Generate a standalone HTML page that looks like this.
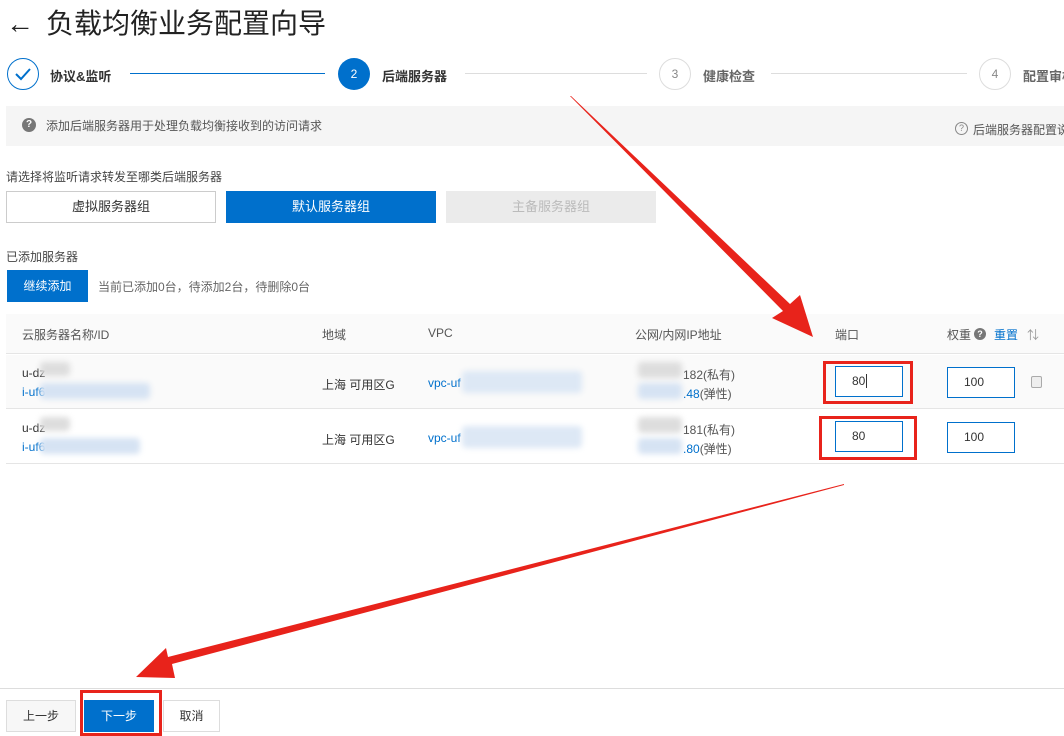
<!DOCTYPE html>
<html><head><meta charset="utf-8"><style>
*{margin:0;padding:0;box-sizing:border-box}
body{width:1064px;height:736px;overflow:hidden;background:#fff;position:relative;font-family:"Liberation Sans","Noto Sans CJK SC",sans-serif;color:#333;font-size:12px}
.a{position:absolute;white-space:nowrap}
.circ{position:absolute;width:32px;height:32px;border-radius:50%;text-align:center;line-height:30px;font-size:12px}
.btn{position:absolute;text-align:center;font-size:13px}
.blur{position:absolute;filter:blur(3px);border-radius:4px}
.inp{position:absolute;width:68px;height:31px;border:1px solid #0070cc;background:#fff;font-size:12px;line-height:29px;padding-left:16px}
.red{position:absolute;border:3px solid #e8231b}
</style></head><body>
<div class="a" style="left:6px;top:4px;font-size:28px;line-height:40px;color:#222">←</div>
<div class="a" style="left:46px;top:4px;font-size:28px;line-height:40px;color:#222">负载均衡业务配置向导</div>

<div class="circ" style="left:7px;top:58px;border:1px solid #0070cc;color:#0070cc">
<svg width="30" height="30" viewBox="0 0 30 30"><path d="M8 15 L13 20 L22 10" fill="none" stroke="#0070cc" stroke-width="2"/></svg></div>
<div class="a" style="left:50px;top:66px;font-size:13px;font-weight:bold">协议&amp;监听</div>
<div class="a" style="left:130px;top:73px;width:195px;height:1px;background:#0070cc"></div>
<div class="circ" style="left:338px;top:58px;background:#0070cc;color:#fff;line-height:32px">2</div>
<div class="a" style="left:382px;top:66px;font-size:13px;font-weight:bold">后端服务器</div>
<div class="a" style="left:465px;top:73px;width:182px;height:1px;background:#ddd"></div>
<div class="circ" style="left:659px;top:58px;border:1px solid #ddd;color:#888">3</div>
<div class="a" style="left:703px;top:66px;font-size:13px;font-weight:bold;color:#666">健康检查</div>
<div class="a" style="left:771px;top:73px;width:196px;height:1px;background:#ddd"></div>
<div class="circ" style="left:979px;top:58px;border:1px solid #ddd;color:#888">4</div>
<div class="a" style="left:1023px;top:66px;font-size:13px;font-weight:bold;color:#666">配置审核</div>

<div class="a" style="left:6px;top:106px;width:1058px;height:40px;background:#f5f5f5"></div>
<div class="a" style="left:22px;top:118px;width:14px;height:14px;border-radius:50%;background:#777;color:#fff;font-size:10px;text-align:center;line-height:14px;font-weight:bold">?</div>
<div class="a" style="left:46px;top:117px;color:#555">添加后端服务器用于处理负载均衡接收到的访问请求</div>
<div class="a" style="left:955px;top:122px;width:13px;height:13px;border-radius:50%;border:1px solid #888;color:#888;font-size:9px;text-align:center;line-height:11px">?</div>
<div class="a" style="left:973px;top:121px;color:#555">后端服务器配置说明</div>

<div class="a" style="left:6px;top:168px;color:#444">请选择将监听请求转发至哪类后端服务器</div>
<div class="btn" style="left:6px;top:191px;width:210px;height:32px;border:1px solid #ccc;line-height:30px">虚拟服务器组</div>
<div class="btn" style="left:226px;top:191px;width:210px;height:32px;background:#0070cc;color:#fff;line-height:32px">默认服务器组</div>
<div class="btn" style="left:446px;top:191px;width:210px;height:32px;background:#ebebeb;color:#bbb;line-height:32px">主备服务器组</div>

<div class="a" style="left:6px;top:248px;color:#444">已添加服务器</div>
<div class="btn" style="left:7px;top:270px;width:81px;height:32px;background:#0070cc;color:#fff;line-height:32px;font-size:12px">继续添加</div>
<div class="a" style="left:98px;top:278px;color:#666">当前已添加0台，待添加2台，待删除0台</div>

<div class="a" style="left:6px;top:314px;width:1058px;height:40px;background:#fafafa;border-bottom:1px solid #e5e5e5"></div>
<div class="a" style="left:22px;top:326px;color:#555">云服务器名称/ID</div>
<div class="a" style="left:322px;top:326px;color:#555">地域</div>
<div class="a" style="left:428px;top:326px;color:#555">VPC</div>
<div class="a" style="left:635px;top:326px;color:#555">公网/内网IP地址</div>
<div class="a" style="left:835px;top:326px;color:#555">端口</div>
<div class="a" style="left:947px;top:326px;color:#555">权重</div>
<div class="a" style="left:974px;top:328px;width:12px;height:12px;border-radius:50%;background:#777;color:#fff;font-size:9px;text-align:center;line-height:12px;font-weight:bold">?</div>
<div class="a" style="left:994px;top:326px;color:#0070cc">重置</div>
<div class="a" style="left:1027px;top:326px;color:#999">⇅</div>

<div class="a" style="left:6px;top:355px;width:1058px;height:54px;background:#fafafa;border-bottom:1px solid #e5e5e5"></div>
<div class="a" style="left:6px;top:410px;width:1058px;height:54px;border-bottom:1px solid #e5e5e5"></div>

<div class="a" style="left:22px;top:366px">u-dz</div>
<div class="a" style="left:22px;top:385px;color:#0070cc">i-uf6</div>
<div class="blur" style="left:40px;top:362px;width:30px;height:14px;background:#ddd"></div>
<div class="blur" style="left:40px;top:383px;width:110px;height:16px;background:#d6e3f3"></div>
<div class="a" style="left:322px;top:376px">上海 可用区G</div>
<div class="a" style="left:428px;top:376px;color:#0070cc">vpc-uf</div>
<div class="blur" style="left:462px;top:371px;width:120px;height:22px;background:#dde8f5"></div>
<div class="blur" style="left:638px;top:362px;width:44px;height:16px;background:#ddd"></div>
<div class="blur" style="left:638px;top:383px;width:44px;height:16px;background:#d6e3f3"></div>
<div class="a" style="left:683px;top:366px;color:#555">182(私有)</div>
<div class="a" style="left:683px;top:385px;color:#555"><span style="color:#0070cc">.48</span>(弹性)</div>
<div class="inp" style="left:835px;top:366px">80<span style="border-left:1px solid #333;margin-left:1px"></span></div>
<div class="inp" style="left:947px;top:367px">100</div>
<div class="a" style="left:1031px;top:376px;width:11px;height:12px;border:1px solid #aaa;border-radius:2px;background:#eee"></div>

<div class="a" style="left:22px;top:421px">u-dz</div>
<div class="a" style="left:22px;top:440px;color:#0070cc">i-uf6</div>
<div class="blur" style="left:40px;top:417px;width:30px;height:14px;background:#ddd"></div>
<div class="blur" style="left:40px;top:438px;width:100px;height:16px;background:#d6e3f3"></div>
<div class="a" style="left:322px;top:431px">上海 可用区G</div>
<div class="a" style="left:428px;top:431px;color:#0070cc">vpc-uf</div>
<div class="blur" style="left:462px;top:426px;width:120px;height:22px;background:#dde8f5"></div>
<div class="blur" style="left:638px;top:417px;width:44px;height:16px;background:#ddd"></div>
<div class="blur" style="left:638px;top:438px;width:44px;height:16px;background:#d6e3f3"></div>
<div class="a" style="left:683px;top:421px;color:#555">181(私有)</div>
<div class="a" style="left:683px;top:440px;color:#555"><span style="color:#0070cc">.80</span>(弹性)</div>
<div class="inp" style="left:835px;top:421px">80</div>
<div class="inp" style="left:947px;top:422px">100</div>

<div class="red" style="left:823px;top:361px;width:90px;height:43px"></div>
<div class="red" style="left:819px;top:416px;width:98px;height:44px"></div>

<div class="a" style="left:0;top:688px;width:1064px;height:1px;background:#ddd"></div>
<div class="btn" style="left:6px;top:700px;width:70px;height:32px;border:1px solid #ddd;background:#f7f7f7;line-height:30px;font-size:12px">上一步</div>
<div class="btn" style="left:84px;top:700px;width:70px;height:32px;background:#0070cc;color:#fff;line-height:32px;font-size:12px">下一步</div>
<div class="btn" style="left:163px;top:700px;width:57px;height:32px;border:1px solid #ddd;line-height:30px;font-size:12px">取消</div>
<div class="red" style="left:80px;top:690px;width:82px;height:46px"></div>

<svg class="a" style="left:0;top:0" width="1064" height="736">
<polygon points="570,96 571,96 790,304 800,295 813,337 772,318 783,311" fill="#e8231b"/>
<polygon points="844,484 844,485 172,664 175,678 136,677 166,648 168,657" fill="#e8231b"/>
</svg>
</body></html>
